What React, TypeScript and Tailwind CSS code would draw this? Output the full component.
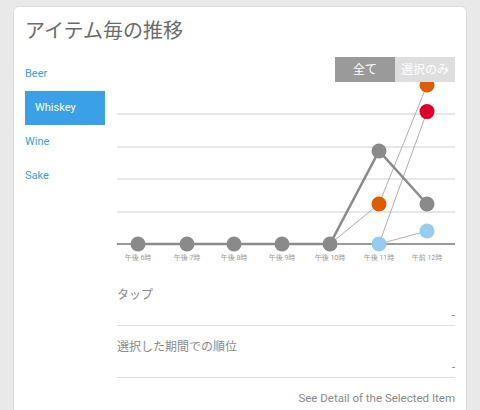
import React from 'react';

const xs = [21, 70, 117, 165, 213, 262, 310];
const labels = ['午後 6時', '午後 7時', '午後 8時', '午後 9時', '午後 10時', '午後 11時', '午前 12時'];
const main = [162, 162, 162, 162, 162, 69, 122];

const App: React.FC = () => {
  return (
    <div className="w-[480px] h-[410px] overflow-hidden bg-[#e9e9e9] pl-[13px] pt-[6px] font-['Roboto','Noto_Sans_CJK_JP',sans-serif]">
      <div className="w-[454px] h-[420px] bg-white border border-[#dadada] rounded-t-[6px] pl-[11px] pr-[11px] pt-[9px]">
        {/* Title */}
        <h1 className="text-[20px] leading-[30px] text-[#6b6b6b] font-normal">アイテム毎の推移</h1>

        <div className="flex gap-[12px]">
          {/* Item nav */}
          <div className="w-[80px] pt-[11px] flex flex-col text-[11px] text-[#3a9fe3]">
            <div className="h-[34px] flex items-center">Beer</div>
            <div className="h-[34px] flex items-center bg-[#3aa0e8] text-white pl-[10px]">Whiskey</div>
            <div className="h-[34px] flex items-center">Wine</div>
            <div className="h-[34px] flex items-center">Sake</div>
          </div>

          {/* Chart + detail */}
          <div className="w-[338px] pt-[11px]">
            <div className="flex justify-end h-[25px] relative z-10 text-[12px]">
              <div className="w-[60px] bg-[#9a9a9a] text-white flex items-center justify-center">全て</div>
              <div className="w-[60px] bg-[#dedede] text-white flex items-center justify-center">選択のみ</div>
            </div>
            <svg width="338" height="183" className="block overflow-visible">
              {[32, 65, 97, 130].map((y) => (
                <line key={y} x1="0" x2="338" y1={y} y2={y} stroke="#cfcfcf" strokeWidth="1" />
              ))}
              <line x1="0" x2="338" y1="162" y2="162" stroke="#9a9a9a" strokeWidth="2" />
              <polyline points="213,162 262,122 310,3" fill="none" stroke="#b0b0b0" strokeWidth="1" />
              <polyline points="262,162 310,29.6" fill="none" stroke="#b0b0b0" strokeWidth="1" />
              <polyline points="262,162 310,149" fill="none" stroke="#b0b0b0" strokeWidth="1" />
              <polyline
                points={xs.map((x, i) => `${x},${main[i]}`).join(' ')}
                fill="none"
                stroke="#8a8a8a"
                strokeWidth="2.5"
              />
              {xs.map((x, i) => (
                <circle key={x} cx={x} cy={main[i]} r="7.5" fill="#8a8a8a" />
              ))}
              <circle cx="262" cy="122" r="7.5" fill="#df5c00" />
              <circle cx="310" cy="3" r="7.5" fill="#df5c00" />
              <circle cx="310" cy="29.6" r="7.5" fill="#de0029" />
              <circle cx="262" cy="162" r="7.5" fill="#96ccf0" />
              <circle cx="310" cy="149" r="7.5" fill="#96ccf0" />
              {xs.map((x, i) => (
                <text key={x} x={x} y="178" textAnchor="middle" fontSize="7" fill="#9a9a9a">
                  {labels[i]}
                </text>
              ))}
            </svg>

            <div className="mt-[22px] border-b border-[#e2e2e2] pb-[2px] text-[12px] text-[#8a8a8a]">
              <div className="leading-[16px]">タップ</div>
              <div className="leading-[16px] mt-[4px] text-right">-</div>
            </div>
            <div className="pt-[13px] border-b border-[#e2e2e2] pb-[2px] text-[12px] text-[#8a8a8a]">
              <div className="leading-[16px]">選択した期間での順位</div>
              <div className="leading-[16px] mt-[4px] text-right">-</div>
            </div>
            <div className="mt-[12px] text-right text-[11.5px] leading-[16px] text-[#8a8a8a]">
              See Detail of the Selected Item
            </div>
          </div>
        </div>
      </div>
    </div>
  );
};

export default App;
